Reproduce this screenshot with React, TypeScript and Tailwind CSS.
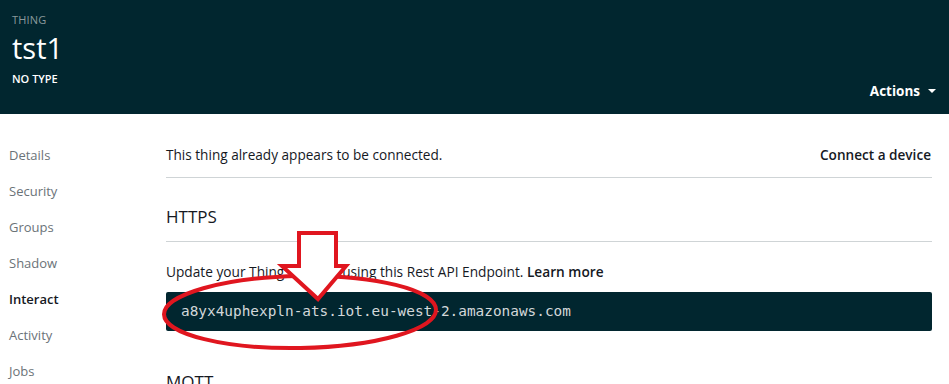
const navItems = ["Details", "Security", "Groups", "Shadow", "Interact", "Activity", "Jobs"];

export default function App() {
  return (
    <div className="w-[949px] h-[384px] overflow-hidden bg-white relative font-['Open_Sans',sans-serif]">
      {/* header */}
      <header className="h-[114px] bg-[#01262f] px-3 pt-[13px] flex flex-col relative">
        <div className="text-[11px] leading-[14px] text-[#8a9a9c] tracking-[0.2px]">THING</div>
        <div className="text-[29px] leading-[34px] text-white mt-[4px]">tst1</div>
        <div className="text-[11px] leading-[14px] text-white font-semibold mt-[7px]">NO TYPE</div>
        <button className="absolute right-[13px] top-[81px] flex items-center gap-[8px] text-white text-[13.5px] font-bold">
          Actions
          <span className="w-0 h-0 border-l-[4px] border-r-[4px] border-t-[4px] border-l-transparent border-r-transparent border-t-white" />
        </button>
      </header>

      <div className="flex">
        {/* sidebar */}
        <nav className="w-[166px] pl-[9px] pt-[32px] flex flex-col gap-[18px]">
          {navItems.map((item) => (
            <div
              key={item}
              className={`text-[13px] leading-[18px] ${item === "Interact" ? "text-[#16191f] font-semibold" : "text-[#6b7378]"}`}
            >
              {item}
            </div>
          ))}
        </nav>

        {/* main */}
        <main className="w-[766px] pt-[32px]">
          <div className="flex justify-between items-center text-[13.6px] leading-[18px] text-[#16191f] pb-[13px] border-b border-[#cfd4d6]">
            <span>This thing already appears to be connected.</span>
            <span className="font-semibold text-[13.6px] pr-[1px]">Connect a device</span>
          </div>
          <h2 className="text-[17px] leading-[22px] text-[#16191f] mt-[28px] pb-[13px] border-b border-[#cfd4d6]">HTTPS</h2>
          <p className="text-[13.7px] leading-[18px] text-[#16191f] mt-[21px]">
            Update your Thing Shadow using this Rest API Endpoint. <span className="font-semibold">Learn more</span>
          </p>
          <div className="mt-[11px] h-[39px] bg-[#01262f] rounded-[2px] flex items-center px-[15px]">
            <code className="font-['DejaVu_Sans_Mono',monospace] text-[14.4px] text-[#d3d8da]">a8yx4uphexpln-ats.iot.eu-west-2.amazonaws.com</code>
          </div>
          <h2 className="text-[17px] leading-[22px] text-[#16191f] mt-[40px]">MQTT</h2>
        </main>
      </div>

      {/* red annotation */}
      <svg className="absolute left-0 top-0 pointer-events-none" width="949" height="384">
        <ellipse cx="300" cy="312" rx="136" ry="36" fill="none" stroke="#e0161f" strokeWidth="4" transform="rotate(-1 300 312)" />
        <polygon
          points="299,233 336,233 336,266 346,266 318,299 282,266 299,266"
          fill="white"
          stroke="#e0161f"
          strokeWidth="4"
          strokeLinejoin="miter"
        />
      </svg>
    </div>
  );
}
